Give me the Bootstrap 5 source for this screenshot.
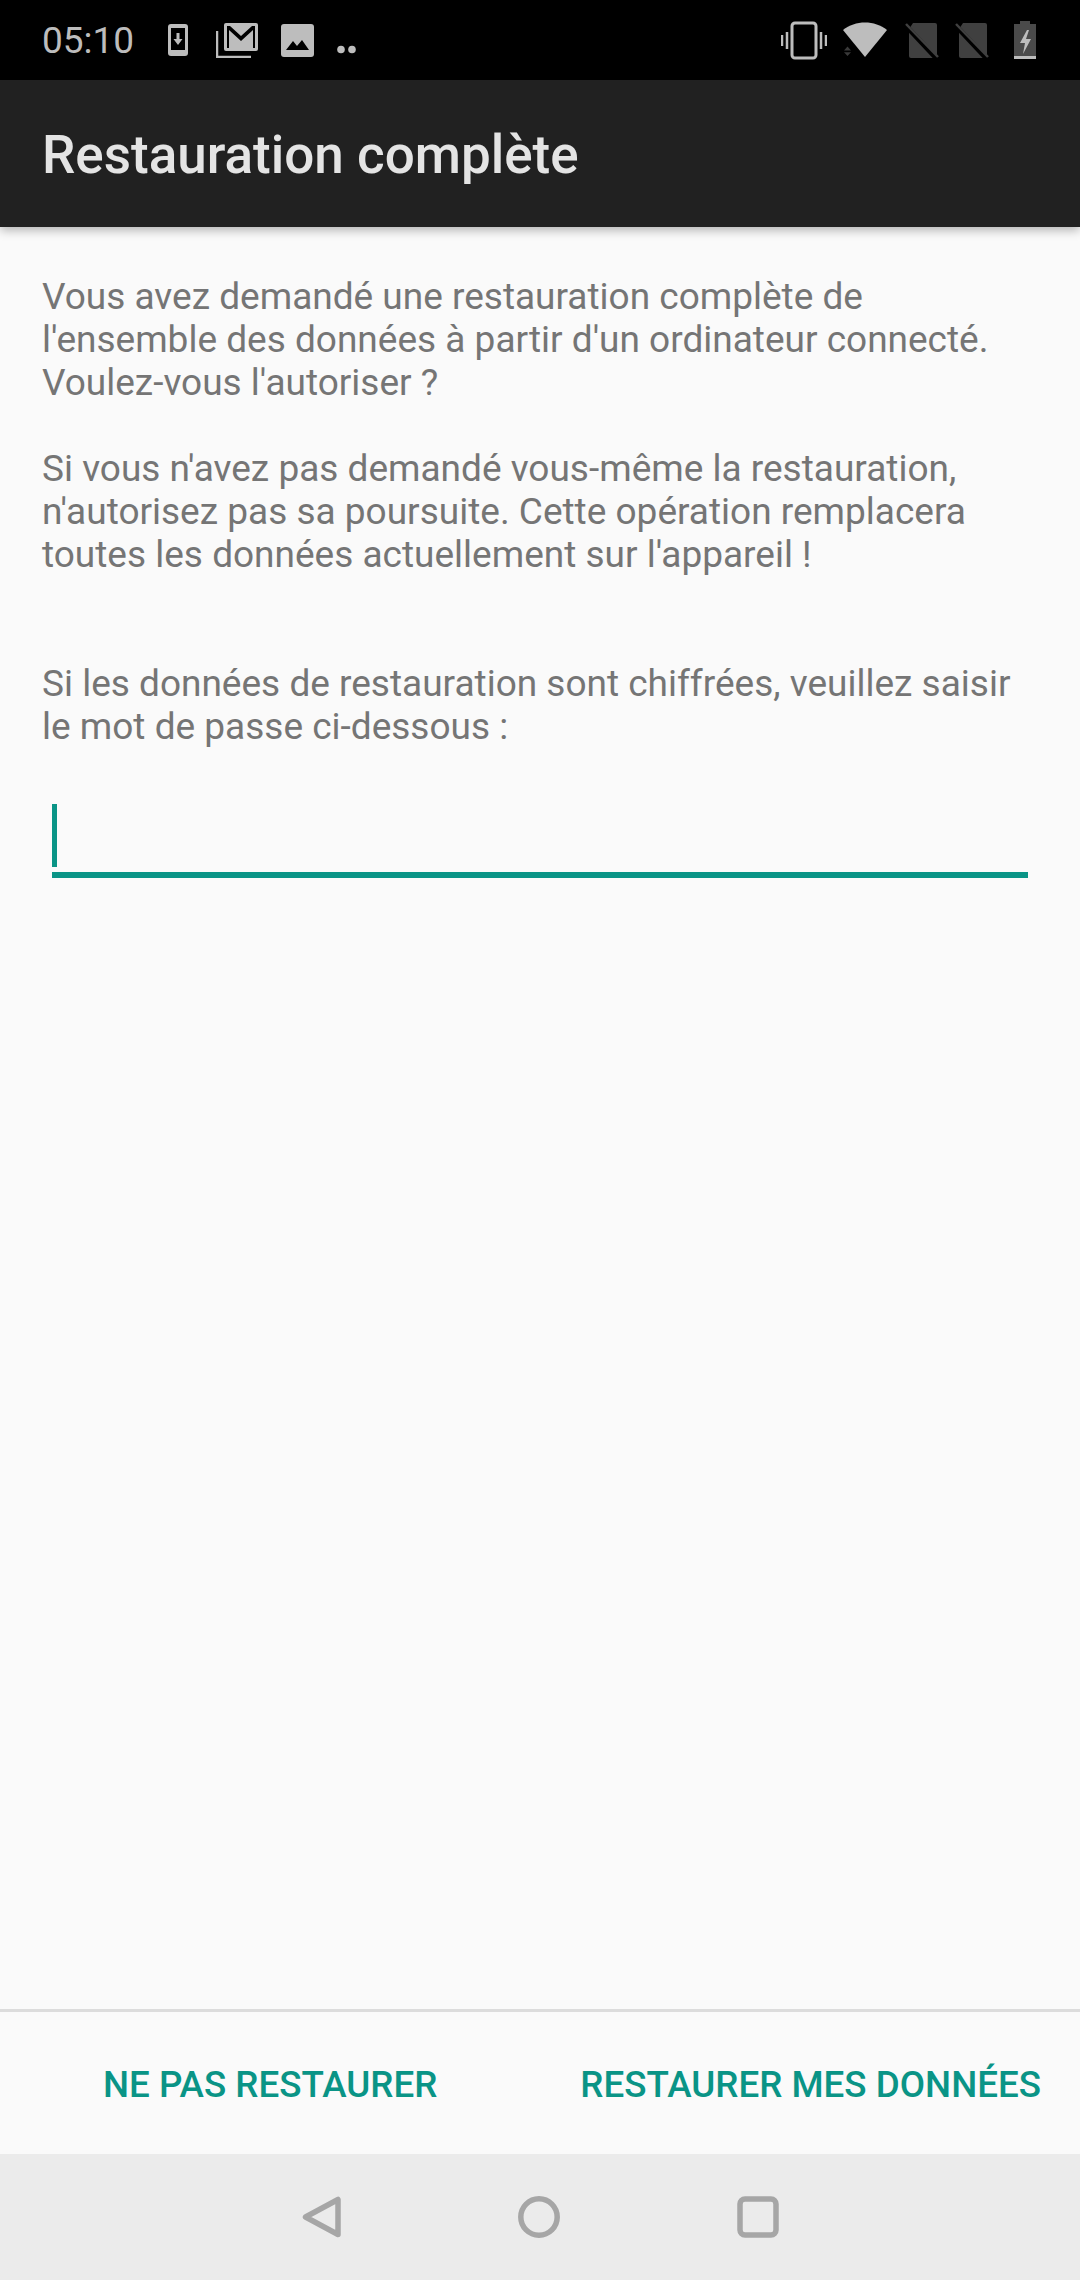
<!DOCTYPE html>
<html lang="fr">
<head>
  <meta charset="UTF-8">
  <title>Restauration complète</title>
  <link href="https://cdn.jsdelivr.net/npm/bootstrap@5.3.0/dist/css/bootstrap.min.css" rel="stylesheet">
  <style>
    html, body { height: 100%; }
    body { width: 1080px; height: 2280px; margin: 0; background: #fafafa; font-family: Roboto, "Noto Sans", sans-serif; overflow: hidden; }
    .phone-shell { height: 2280px; }
    .status-strip { height: 80px; background: #000; padding: 0 42px; color: #bdbdbd; flex: none; }
    .status-time { font-size: 37px; width: 126px; line-height: 1; }
    .status-icon { display: block; flex: none; }
    .icon-mail { margin-left: 28px; }
    .icon-image { margin-left: 22px; }
    .icon-more { margin-left: 23px; margin-top: 19px; }
    .icon-wifi { margin-left: 15px; }
    .icon-sim-a { margin-left: 17px; }
    .icon-sim-b { margin-left: 16px; }
    .icon-battery { margin-left: 25px; margin-right: 2px; }
    .title-strip { height: 147px; background: #212121; padding: 4px 42px 0; box-shadow: 0 3px 10px rgba(0,0,0,.3); flex: none; position: relative; }
    .title-strip h1 { margin: 0; font-size: 53px; font-weight: 500; color: #e4e4e4; line-height: 1; }
    .restore-body { padding: 48px 42px 0; flex: 1 1 auto; }
    .restore-text { margin: 0; font-size: 37px; line-height: 43px; color: #757575; }
    .restore-gap-s { height: 43px; }
    .restore-gap-l { height: 86px; }
    .restore-field { margin: 56px 10px 0 10px; height: 74px; border-bottom: 6px solid #0a9486; }
    .restore-caret { width: 5px; height: 63px; background: #0a9486; }
    .action-strip { height: 145px; border-top: 3px solid #dcdcdc; flex: none; padding: 4px 39px 0 0; gap: 143px; }
    .action-strip .btn { padding: 0; border: 0; border-radius: 0; background: transparent; color: #0a9486; font-size: 36.75px; font-weight: 500; line-height: 1; white-space: nowrap; }
    .nav-strip { height: 126px; background: #ebebeb; flex: none; }
    .nav-circle { margin-left: 175px; }
    .nav-square { margin-left: 177px; }
  </style>
</head>
<body>
<div class="phone-shell d-flex flex-column">
  <div class="status-strip d-flex align-items-center">
    <span class="status-time">05:10</span>
    <svg class="status-icon" width="20" height="32" viewBox="0 0 20 32"><rect width="20" height="32" rx="3" fill="#bdbdbd"/><rect x="3" y="4" width="14" height="22" fill="#000"/><path d="M8.500 9h3v6h3L10 21l-4.500-6h3z" fill="#bdbdbd"/></svg>
    <svg class="status-icon icon-mail" width="43" height="36" viewBox="0 0 43 36"><path d="M1 9v26h34" fill="none" stroke="#bdbdbd" stroke-width="2.500"/><rect x="8" y="1" width="34" height="28" rx="2" fill="#bdbdbd"/><path d="M11 26V4h3l11 10L36 4h3v22h-2V8L25 19 13 8v18z" fill="#000"/></svg>
    <svg class="status-icon icon-image" width="33" height="33" viewBox="0 0 33 33"><rect width="33" height="33" rx="3" fill="#bdbdbd"/><path d="M5 26l7-9 4 5 5-6 7 10z" fill="#000"/></svg>
    <svg class="status-icon icon-more" width="19" height="9" viewBox="0 0 19 9"><circle cx="4" cy="4.500" r="3.800" fill="#bdbdbd"/><circle cx="15" cy="4.500" r="3.800" fill="#bdbdbd"/></svg>
    <div class="ms-auto d-flex align-items-center">
      <svg class="status-icon" width="46" height="39" viewBox="0 0 46 39"><rect x="11" y="2" width="24" height="35" rx="3" fill="none" stroke="#bdbdbd" stroke-width="3"/><path d="M6 11v17M40 11v17M1 14v11M45 14v11" stroke="#bdbdbd" stroke-width="2.500"/></svg>
      <svg class="status-icon icon-wifi" width="46" height="38" viewBox="0 0 46 38"><path d="M1 9C13-1 33-1 45 9L23 36z" fill="#bdbdbd"/><path d="M5.500 28l-3.500 4h7zM2 34l3.500 4 3.500-4z" fill="#3a3a3a" transform="translate(0 -1) scale(1 .95)"/></svg>
      <svg class="status-icon icon-sim-a" width="34" height="36" viewBox="0 0 34 36"><path d="M8 1h22a2 2 0 0 1 2 2v31a2 2 0 0 1-2 2H6a2 2 0 0 1-2-2V7z" fill="#404040"/><path d="M1 4l31 33" stroke="#000" stroke-width="5"/><path d="M1 2l32 33" stroke="#404040" stroke-width="2.500"/></svg>
      <svg class="status-icon icon-sim-b" width="34" height="36" viewBox="0 0 34 36"><path d="M8 1h22a2 2 0 0 1 2 2v31a2 2 0 0 1-2 2H6a2 2 0 0 1-2-2V7z" fill="#404040"/><path d="M1 4l31 33" stroke="#000" stroke-width="5"/><path d="M1 2l32 33" stroke="#404040" stroke-width="2.500"/></svg>
      <svg class="status-icon icon-battery" width="22" height="38" viewBox="0 0 22 38"><path d="M6 0h10v3h6v35H0V3h6z" fill="#4a4a4a"/><rect y="35" width="22" height="3" fill="#bdbdbd"/><path d="M13 9L6 22h5l-2 11 8-15h-5l3-9z" fill="#bdbdbd"/></svg>
    </div>
  </div>

  <div class="title-strip d-flex align-items-center">
    <h1>Restauration complète</h1>
  </div>

  <div class="restore-body">
    <p class="restore-text">Vous avez demandé une restauration complète de<br>l'ensemble des données à partir d'un ordinateur connecté.<br>Voulez-vous l'autoriser ?</p>
    <div class="restore-gap-s"></div>
    <p class="restore-text">Si vous n'avez pas demandé vous-même la restauration,<br>n'autorisez pas sa poursuite. Cette opération remplacera<br>toutes les données actuellement sur l'appareil !</p>
    <div class="restore-gap-l"></div>
    <p class="restore-text">Si les données de restauration sont chiffrées, veuillez saisir<br>le mot de passe ci-dessous :</p>
    <div class="restore-field"><div class="restore-caret"></div></div>
  </div>

  <div class="action-strip d-flex align-items-center justify-content-end">
    <button type="button" class="btn">NE PAS RESTAURER</button>
    <button type="button" class="btn">RESTAURER MES DONNÉES</button>
  </div>

  <div class="nav-strip d-flex align-items-center justify-content-center">
    <svg width="42" height="42" viewBox="0 0 42 42"><path d="M37 3.500v35L4.500 21z" fill="none" stroke="#a6a6a6" stroke-width="5.500" stroke-linejoin="round"/></svg>
    <svg class="nav-circle" width="42" height="42" viewBox="0 0 42 42"><circle cx="21" cy="21" r="18.200" fill="none" stroke="#a6a6a6" stroke-width="5.500"/></svg>
    <svg class="nav-square" width="42" height="42" viewBox="0 0 42 42"><rect x="3" y="3" width="36" height="36" rx="5" fill="none" stroke="#a6a6a6" stroke-width="5.500"/></svg>
  </div>
</div>
<script src="https://cdn.jsdelivr.net/npm/bootstrap@5.3.0/dist/js/bootstrap.bundle.min.js"></script>
</body>
</html>
